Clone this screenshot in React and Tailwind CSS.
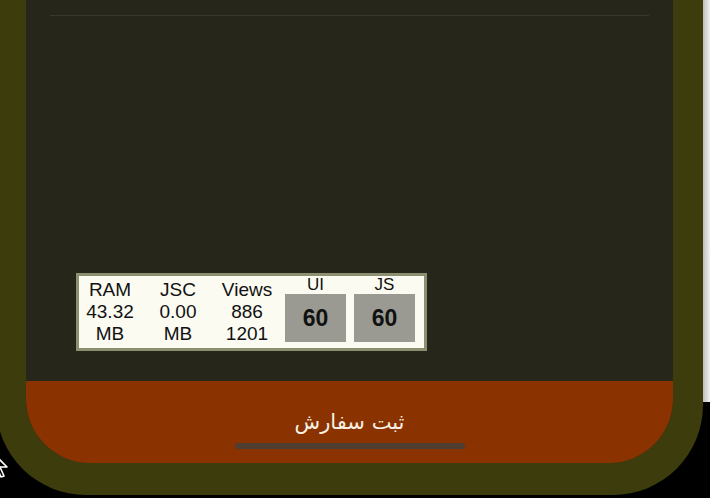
import React from 'react';

const sans = { fontFamily: '"Liberation Sans", Arial, sans-serif' };

const Stat = ({ label, value, unit, width }) => (
    <div className={`flex flex-col items-center pt-[3px] text-[19px] leading-[22px] text-[#111] ${width}`}>
        <span>{label}</span>
        <span>{value}</span>
        <span>{unit}</span>
    </div>
);

const Fps = ({ label }) => (
    <div className="flex flex-col items-center">
        <span className="text-[17px] leading-[18px] text-[#111]">{label}</span>
        <div className="w-[61px] h-[48px] bg-[#9a9a92] flex items-center justify-center">
            <span className="text-[23px] font-bold text-[#111]">60</span>
        </div>
    </div>
);

const PerfMonitor = () => (
    <div className="ml-[50px] mb-[30px] w-[351px] h-[78px] border-[3px] border-[#8e8e70] bg-[#fbfbf2] flex" style={sans}>
        <Stat label="RAM" value="43.32" unit="MB" width="w-[62px]" />
        <Stat label="JSC" value="0.00" unit="MB" width="w-[74px]" />
        <Stat label="Views" value="886" unit="1201" width="w-[64px]" />
        <div className="flex gap-[8px] ml-[6px]">
            <Fps label="UI" />
            <Fps label="JS" />
        </div>
    </div>
);

export default function App() {
    return (
        <div className="relative w-[710px] h-[498px] bg-black overflow-hidden">
            {/* device frame */}
            <div className="ml-[-4px] w-[707px] h-[495px] bg-[#3c3c0c] rounded-b-[90px] px-[30px] pb-[32px]">
                <div className="h-full bg-[#26261a] rounded-b-[64px] overflow-hidden flex flex-col">
                    <div className="pt-[15px] px-[24px]">
                        <div className="h-px bg-[#3a3a2c]" />
                    </div>
                    <div className="flex-1" />
                    <PerfMonitor />
                    <div className="h-[82px] bg-[#8a3300] flex flex-col items-center pt-[28px]">
                        <span
                            dir="rtl"
                            className="text-[21px] leading-[26px] text-[#f6f0e2]"
                            style={{ fontFamily: '"DejaVu Sans", "Noto Sans", sans-serif' }}
                        >
                            ثبت سفارش
                        </span>
                        <div className="mt-[8px] w-[230px] h-[6px] rounded-full bg-[#4f3e32]" />
                    </div>
                </div>
            </div>

            {/* window scrollbar strip */}
            <div className="absolute top-0 right-0 w-[7px] h-[402px] bg-gradient-to-r from-[#bdbdbd] to-[#f2f2f2]" />

            {/* mouse cursor */}
            <svg className="absolute left-[-9px] top-[451px]" width="20" height="28" viewBox="0 0 20 28">
                <path d="M1 1 L1 22 L6 17 L10 26 L13 25 L9 16 L16 16 Z" fill="black" stroke="white" strokeWidth="1.6" strokeLinejoin="round" />
            </svg>
        </div>
    );
}
